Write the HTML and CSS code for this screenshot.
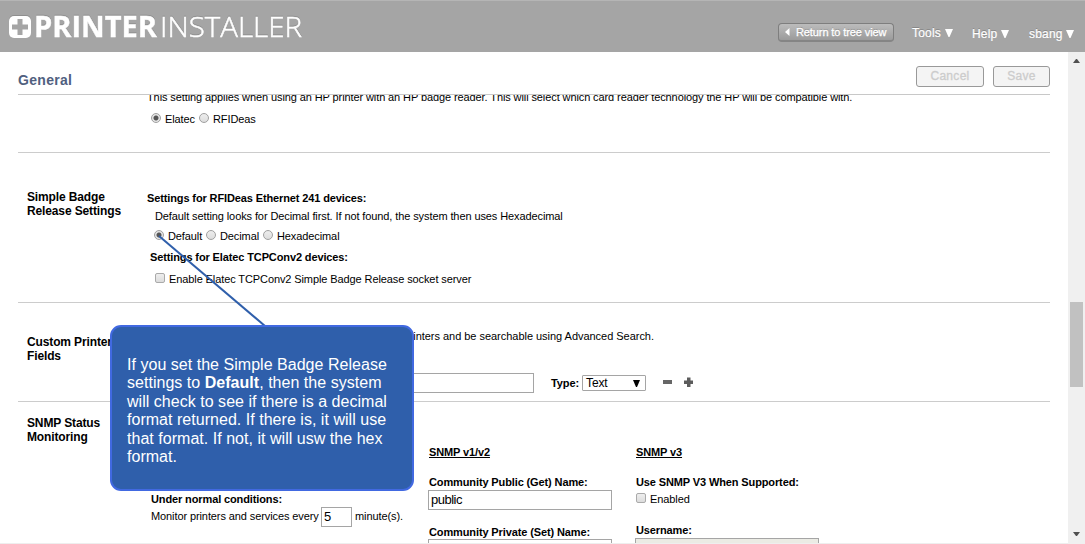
FILE: index.html
```html
<!DOCTYPE html>
<html lang="en">
<head>
<meta charset="utf-8">
<title>Printer Installer</title>
<link rel="stylesheet" href="styles.css">
</head>
<body>
<div class="app">
  <header class="header">
    <svg class="logo" width="300" height="42" viewBox="0 0 300 42">
      <rect x="1" y="15" width="22" height="22" rx="5" fill="#fff"/>
      <path d="M9.500 18h5v5.500h5.500v5h-5.500V34h-5v-5.500H4v-5h5.500z" fill="#a5a5a5"/>
      <text class="logo-bold" x="26" y="36" textLength="123" lengthAdjust="spacingAndGlyphs">PRINTER</text>
      <text class="logo-light" x="152" y="36" textLength="142" lengthAdjust="spacingAndGlyphs">INSTALLER</text>
    </svg>
    <nav class="nav">
      <a class="back"><svg width="5" height="8" viewBox="0 0 5 8"><path d="M4.500 0v8L0 4z" fill="#fff"/></svg><span>Return to tree view</span></a>
      <a class="menu tools">Tools <svg width="8" height="8" viewBox="0 0 8 8"><path d="M0 0h8L4.500 8h-1z" fill="#fff"/></svg></a>
      <a class="menu help">Help <svg width="8" height="8" viewBox="0 0 8 8"><path d="M0 0h8L4.500 8h-1z" fill="#fff"/></svg></a>
      <a class="menu user">sbang <svg width="8" height="8" viewBox="0 0 8 8"><path d="M0 0h8L4.500 8h-1z" fill="#fff"/></svg></a>
    </nav>
  </header>
  <div class="main">
    <div class="page">
      <div class="titlebar">
        <h1>General</h1>
        <div class="buttons"><span class="btn cancel">Cancel</span><span class="btn save">Save</span></div>
      </div>
      <div class="content">
        <section class="section reader">
          <h2></h2>
          <div>
            <p class="reader-note">This setting applies when using an HP printer with an HP badge reader. This will select which card reader technology the HP will be compatible with.</p>
            <div class="row reader-options"><i class="radio on"></i><span class="w-elatec">Elatec</span><i class="radio"></i><span>RFIDeas</span></div>
          </div>
        </section>
        <section class="section badge">
          <h2>Simple Badge<br>Release Settings</h2>
          <div>
            <p class="strong rfid-title">Settings for RFIDeas Ethernet 241 devices:</p>
            <p class="rfid-note">Default setting looks for Decimal first. If not found, the system then uses Hexadecimal</p>
            <div class="row rfid-options"><i class="radio on"></i><span class="w-default">Default</span><i class="radio"></i><span class="w-decimal">Decimal</span><i class="radio"></i><span>Hexadecimal</span></div>
            <p class="strong tcp-title">Settings for Elatec TCPConv2 devices:</p>
            <div class="row tcp-option"><i class="check"></i><span>Enable Elatec TCPConv2 Simple Badge Release socket server</span></div>
          </div>
        </section>
        <section class="section custom">
          <h2>Custom Printer<br>Fields</h2>
          <div>
            <p class="custom-note">printers and be searchable using Advanced Search.</p>
            <div class="row field-row">
              <span class="field name-field"></span>
              <span class="strong type-label">Type:</span>
              <span class="select"><span>Text</span><svg width="7" height="7" viewBox="0 0 7 7"><path d="M0 0h7L4 7H3z" fill="#000"/></svg></span>
              <svg class="minus" width="9" height="10" viewBox="0 0 9 10"><path d="M0 3h9v4H0z" fill="#666"/></svg>
              <svg class="plus" width="9" height="10" viewBox="0 0 9 10"><path d="M3 0.500h3.500v3H9v3.500H6.500v3H3v-3H0v-3.500h3z" fill="#5c5c5c"/></svg>
            </div>
          </div>
        </section>
        <section class="section snmp">
          <h2>SNMP Status<br>Monitoring</h2>
          <div class="snmp-columns">
            <div class="conditions">
              <p class="strong cond-title">Under normal conditions:</p>
              <div class="interval"><span class="monitor">Monitor printers and services every</span><span class="field minutes">5</span><span class="unit">minute(s).</span></div>
            </div>
            <div class="v1">
              <p class="strong version"><u>SNMP v1/v2</u></p>
              <p class="strong get-label">Community Public (Get) Name:</p>
              <div class="field">public</div>
              <p class="strong set-label">Community Private (Set) Name:</p>
              <div class="field"></div>
            </div>
            <div class="v3">
              <p class="strong version"><u>SNMP v3</u></p>
              <p class="strong v3-label">Use SNMP V3 When Supported:</p>
              <div class="row v3-option"><i class="check"></i><span>Enabled</span></div>
              <p class="strong user-label">Username:</p>
              <div class="field disabled"></div>
            </div>
          </div>
        </section>
      </div>
    </div>
    <div class="scrollbar">
      <svg width="7" height="4" viewBox="0 0 7 4"><path d="M0 4L3 0h1l3 4z" fill="#505050"/></svg>
      <div class="thumb"></div>
      <svg width="7" height="4" viewBox="0 0 7 4"><path d="M0 0h7L4 4H3z" fill="#505050"/></svg>
    </div>
  </div>
  <svg class="connector" width="110" height="94" viewBox="0 0 110 94"><path d="M2 2L108 92" stroke="#2f5fab" stroke-width="2"/></svg>
  <div class="callout">If you set the Simple Badge Release<br>settings to <b>Default</b>, then the system<br>will check to see if there is a decimal<br>format returned. If there is, it will use<br>that format. If not, it will usw the hex<br>format.</div>
</div>
</body>
</html>
```
FILE: styles.css
```css
* { box-sizing: border-box; }
body { margin: 0; font: 11px/14px "Liberation Sans", Arial, sans-serif; color: #000; background: #fff; }
h1, h2, p { margin: 0; }
svg { display: block; flex: none; }
.app { position: relative; width: 1085px; height: 544px; overflow: hidden; display: flex; flex-direction: column; }

.header { height: 52px; flex: none; background: #a5a5a5; border-top: 1px solid #b5b5b5; display: flex; justify-content: space-between; padding: 0 11px 0 8px; }
.logo { overflow: visible; filter: drop-shadow(0 -1px 0 #8f8f8f); }
.logo text { font-family: "Open Sans", "Noto Sans", sans-serif; font-size: 28px; fill: #fff; }
.logo-bold { font-weight: 700; stroke: #fff; stroke-width: 0.400px; }
.logo-light { font-weight: 300; stroke: #fff; stroke-width: 0.500px; }
.nav { display: flex; align-items: flex-start; color: #fff; white-space: nowrap; text-shadow: 0 -1px 0 #888; }
.back { width: 116px; height: 19px; margin-top: 22px; padding-left: 6px; display: flex; align-items: center; border: 1px solid #7e7e7e; border-bottom: 2px solid #858585; border-radius: 4px; background: linear-gradient(#bcbcbc, #9b9b9b); }
.back span { margin-left: 6px; font-size: 11px; letter-spacing: -0.100px; -webkit-text-stroke: 0.300px #fff; }
.menu { display: flex; align-items: center; gap: 4px; font-size: 12px; line-height: 16px; letter-spacing: 0.200px; -webkit-text-stroke: 0.200px #fff; }
.tools { margin: 24px 0 0 18px; width: 60px; }
.help { margin-top: 25px; width: 57px; }
.user { margin-top: 25px; width: 45px; gap: 3px; }

.main { flex: 1; min-height: 0; display: flex; justify-content: space-between; background: linear-gradient(#eee, #eee) bottom / 100% 1px no-repeat; }
.page { width: 1032px; margin: 0 0 1px 18px; display: flex; flex-direction: column; }
.titlebar { height: 43px; flex: none; display: flex; justify-content: space-between; border-bottom: 1px solid #c8c8c8; }
h1 { margin-top: 20px; font-size: 14px; line-height: 16px; letter-spacing: 0.300px; color: #50607f; }
.buttons { display: flex; gap: 9px; margin-top: 14px; }
.btn { height: 21px; border: 1px solid #999; border-radius: 3px; background: #f4f4f4; color: #ccc; font-size: 12px; line-height: 18px; letter-spacing: 0.300px; -webkit-text-stroke: 0.300px #ccc; text-align: center; }
.cancel { width: 68px; }
.save { width: 57px; }
.content { flex: 1; min-height: 0; overflow: hidden; letter-spacing: -0.100px; }

.section { display: grid; grid-template-columns: 129px 1fr; border-bottom: 1px solid #ccc; white-space: nowrap; }
.section h2 { padding-left: 9px; font-size: 12px; line-height: 14px; letter-spacing: -0.130px; }
.strong { font-weight: 700; letter-spacing: -0.120px; }
.row { display: flex; align-items: center; height: 14px; }
.radio { flex: none; width: 10px; height: 10px; margin: 0 4px 2px 0; border: 1px solid #a0a0a0; border-radius: 50%; background: linear-gradient(#ededed, #ddd); }
.radio.on { background: radial-gradient(circle, #555 2px, #e5e5e5 3px); }
.check { flex: none; width: 10px; height: 10px; margin: 0 4px 2px 0; border: 1px solid #aaa; border-radius: 2px; background: linear-gradient(#eee, #dcdcdc); }
.field { height: 20px; border: 1px solid #a5a5a5; font-size: 13px; line-height: 18px; letter-spacing: -0.500px; padding-left: 2px; background: #fff; }

.reader { height: 58px; }
.reader-note { margin-top: -5px; }
.reader-options { margin: 8px 0 0 4px; }
.w-elatec { width: 34px; }
.badge { height: 150px; }
.badge h2 { margin-top: 37px; }
.rfid-title { margin-top: 38px; }
.rfid-note { margin: 4px 0 0 8px; }
.rfid-options { margin: 6px 0 0 7px; }
.w-default { width: 38px; }
.w-decimal { width: 43px; }
.tcp-title { margin: 7px 0 0 3px; }
.tcp-option { margin: 8px 0 0 8px; }
.custom { height: 99px; }
.custom h2 { margin-top: 32px; }
.custom-note { margin: 26px 0 0 0; width: 507px; text-align: right; letter-spacing: -0.030px; }
.field-row { margin-top: 30px; height: 20px; }
.name-field { width: 234px; margin-left: 153px; }
.type-label { margin-left: 17px; width: 31px; }
.select { width: 64px; height: 16px; padding: 0 5px 0 3px; display: flex; align-items: center; justify-content: space-between; border: 1px solid #a5a5a5; border-radius: 1px; font-size: 12px; line-height: 14px; }
.minus { margin: 0 0 2px 17px; }
.plus { margin: 0 0 2px 12px; }
.snmp { height: 160px; border: 0; }
.snmp h2 { margin-top: 14px; }
.snmp-columns { display: grid; grid-template-columns: 281px 207px 184px; }
.conditions { padding: 90px 0 0 4px; }
.interval { display: flex; height: 20px; margin-top: 1px; line-height: 19px; }
.monitor { width: 170px; }
.minutes { width: 31px; margin-right: 3px; }
.v1 .field, .v3 .field { width: 184px; }
.version { margin: 43px 0 0 1px; }
.get-label { margin: 16px 0 1px 1px; }
.set-label { margin: 15px 0 0 1px; }
.v3-label { margin: 16px 0 0 1px; }
.v3-option { margin: 3px 0 0 1px; }
.user-label { margin: 17px 0 0 1px; }
.v3 .disabled { background: #ebebe4; margin-top: 1px; }

.scrollbar { width: 17px; background: #f0f0f0; display: flex; flex-direction: column; align-items: center; padding: 7px 1px 8px 0; }
.thumb { width: 13px; height: 85px; margin: 239px 0 145px; background: #c1c1c1; flex: none; }

.connector { position: absolute; left: 157px; top: 234px; }
.callout { position: absolute; left: 110px; top: 325px; width: 304px; height: 166px; padding: 29px 0 0 15px; border: 2px solid #4169e1; border-radius: 11px; background: #2f5fab; color: #fff; font-size: 16px; line-height: 18.400px; letter-spacing: 0.030px; white-space: nowrap; }
```
